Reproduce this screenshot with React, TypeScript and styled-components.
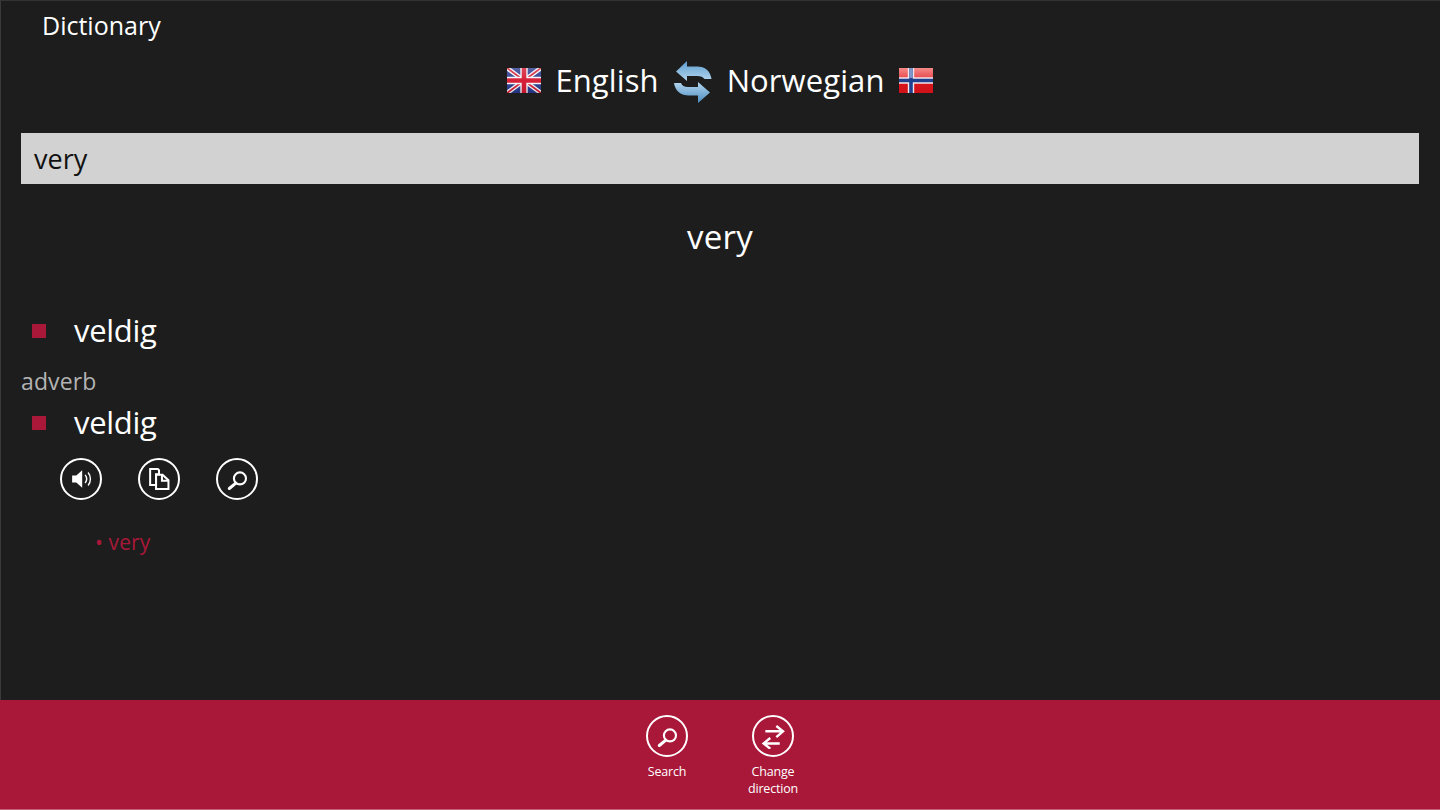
import React from "react";
import styled, { createGlobalStyle } from "styled-components";

const GlobalStyle = createGlobalStyle`
  html, body {
    margin: 0;
    padding: 0;
    background: #1d1d1d;
  }
  * {
    box-sizing: border-box;
  }
`;

const UkFlag = () => (
  <FlagSvg viewBox="0 0 34 25">
    <defs>
      <linearGradient id="ukShine" x1="0" y1="0" x2="0" y2="1">
        <stop offset="0" stopColor="#fff" stopOpacity=".22" />
        <stop offset=".5" stopColor="#fff" stopOpacity=".04" />
        <stop offset="1" stopColor="#000" stopOpacity=".1" />
      </linearGradient>
    </defs>
    <rect width="34" height="25" fill="#27398c" />
    <path d="M0 0L34 25M34 0L0 25" stroke="#f4f4f8" strokeWidth="4.4" />
    <path d="M0 0L34 25M34 0L0 25" stroke="#d4172f" strokeWidth="1.8" />
    <path d="M17 0V25M0 12.5H34" stroke="#f6f6f8" strokeWidth="7.4" />
    <path d="M17 0V25M0 12.5H34" stroke="#d4172f" strokeWidth="4.6" />
    <rect width="34" height="25" fill="url(#ukShine)" />
  </FlagSvg>
);

const NorwayFlag = () => (
  <FlagSvg viewBox="0 0 34 25">
    <defs>
      <linearGradient id="noRed" x1="0" y1="0" x2="0" y2="1">
        <stop offset="0" stopColor="#f58a8a" />
        <stop offset=".42" stopColor="#e8484c" />
        <stop offset=".55" stopColor="#d9141c" />
        <stop offset="1" stopColor="#d01218" />
      </linearGradient>
    </defs>
    <rect width="34" height="25" fill="url(#noRed)" />
    <path d="M12 0V25M0 12.5H34" stroke="#f1e6ea" strokeWidth="6.4" />
    <path d="M12 0V25M0 12.5H34" stroke="#1f3f8f" strokeWidth="3.6" />
    <rect x="10.2" width="3.6" height="10" fill="#7f97c8" />
  </FlagSvg>
);

const SwapArrows = () => (
  <SwapSvg viewBox="0 0 40 44">
    <defs>
      <linearGradient id="swapTop" x1="0" y1="0" x2="0" y2="1">
        <stop offset="0" stopColor="#5c9dcf" />
        <stop offset="1" stopColor="#b5d6ee" />
      </linearGradient>
      <linearGradient id="swapBottom" x1="0" y1="0" x2="0" y2="1">
        <stop offset="0" stopColor="#b5d6ee" />
        <stop offset="1" stopColor="#4a8cc2" />
      </linearGradient>
    </defs>
    <path d="M14 1L3 11.5L14 21V16H24C28 16 30 17 31.5 19H38.5C37.5 11 32 6.5 24 6.5H14Z" fill="url(#swapTop)" />
    <path d="M1 23C2 31 8 35.5 16 35.5H25V43L37 32.5L25 22V27H15C11 27 9 25.5 8 23Z" fill="url(#swapBottom)" />
  </SwapSvg>
);

const SpeakerGlyph = () => (
  <GlyphSvg viewBox="0 0 22 22">
    <path d="M3.5 8H7L12 3.5V18.5L7 14H3.5Z" fill="#fff" />
    <path d="M14.5 7.5C16 9.5 16 12.5 14.5 14.5M17 5.5C19.6 8.5 19.6 13.5 17 16.5" fill="none" stroke="#fff" strokeWidth="1.2" />
  </GlyphSvg>
);

const CopyGlyph = () => (
  <GlyphSvg viewBox="0 0 22 22">
    <path d="M3.5 2.5H10L11 3.5V7H8.5V16H3.5Z" fill="none" stroke="#fff" strokeWidth="1.7" />
    <path d="M8.5 7.5H14L19 12V19.5H8.5Z" fill="none" stroke="#fff" strokeWidth="1.7" />
    <path d="M13.5 7.5V12.5H19" fill="none" stroke="#fff" strokeWidth="1.7" />
  </GlyphSvg>
);

const SearchGlyph = () => (
  <GlyphSvg viewBox="0 0 22 22">
    <circle cx="13.5" cy="10.5" r="5.1" fill="none" stroke="#fff" strokeWidth="1.8" />
    <path d="M10 14.5L4.5 19" fill="none" stroke="#fff" strokeWidth="2.6" strokeLinecap="round" />
  </GlyphSvg>
);

const DirectionGlyph = () => (
  <GlyphSvg viewBox="0 0 22 22">
    <path d="M4.5 7H19.5M13.8 2.5L19.5 7L13.8 12" fill="none" stroke="#fff" strokeWidth="2" />
    <path d="M16.7 17.3H3M8.7 12.7L3 17.3L8.7 21.8" fill="none" stroke="#fff" strokeWidth="2" />
  </GlyphSvg>
);

const App = () => (
  <Page>
    <GlobalStyle />
    <Main>
      <Title>Dictionary</Title>
      <LanguageRow>
        <UkFlag />
        <LanguageName>English</LanguageName>
        <SwapArrows />
        <LanguageName>Norwegian</LanguageName>
        <NorwayFlag />
      </LanguageRow>
      <SearchBox>very</SearchBox>
      <HeadWord>very</HeadWord>
      <Translation $first>
        <Bullet />
        <TranslationText>veldig</TranslationText>
      </Translation>
      <PartOfSpeech>adverb</PartOfSpeech>
      <Translation>
        <Bullet />
        <TranslationText>veldig</TranslationText>
      </Translation>
      <ActionRow>
        <RoundButton><SpeakerGlyph /></RoundButton>
        <RoundButton><CopyGlyph /></RoundButton>
        <RoundButton><SearchGlyph /></RoundButton>
      </ActionRow>
      <Example>• very</Example>
    </Main>
    <AppBar>
      <BarCommand>
        <RoundButton><SearchGlyph /></RoundButton>
        <BarLabel>Search</BarLabel>
      </BarCommand>
      <BarCommand>
        <RoundButton><DirectionGlyph /></RoundButton>
        <BarLabel>Change direction</BarLabel>
      </BarCommand>
    </AppBar>
  </Page>
);

const Page = styled.div`
  width: 1440px;
  height: 810px;
  display: flex;
  flex-direction: column;
  overflow: hidden;
  background: #1d1d1d;
  font-family: "Open Sans", "Noto Sans", sans-serif;
  color: #fff;
`;
const Main = styled.div`
  flex: 1;
  display: flex;
  flex-direction: column;
  padding: 0 21px 0 20px;
  border-top: 1px solid #333;
  border-left: 1px solid #3a3a3a;
`;
const Title = styled.div`
  height: 49px;
  padding: 6px 0 0 21px;
  font-size: 25px;
  line-height: 36px;
`;
const LanguageRow = styled.div`
  height: 60px;
  display: flex;
  align-items: center;
  justify-content: center;
  gap: 14px;
`;
const LanguageName = styled.span`
  font-size: 31px;
  line-height: 42px;
  letter-spacing: 0.1px;
`;
const FlagSvg = styled.svg`
  width: 34px;
  height: 25px;
  display: block;
`;
const SwapSvg = styled.svg`
  width: 40px;
  height: 44px;
  margin-top: 3px;
  display: block;
`;
const SearchBox = styled.div`
  height: 51px;
  margin-top: 23px;
  padding-left: 13px;
  background: #d2d2d2;
  color: #111;
  font-size: 27px;
  line-height: 52px;
`;
const HeadWord = styled.div`
  margin-top: 31px;
  text-align: center;
  font-size: 33px;
  line-height: 44px;
  letter-spacing: 0.3px;
`;
const Translation = styled.div<{ $first?: boolean }>`
  display: flex;
  align-items: center;
  height: 44px;
  margin-top: ${(p) => (p.$first ? "50px" : "0")};
  padding-left: 11px;
`;
const Bullet = styled.span`
  width: 14px;
  height: 14px;
  background: #a91839;
`;
const TranslationText = styled.span`
  margin-left: 28px;
  padding-bottom: 2px;
  font-size: 31px;
  line-height: 42px;
  letter-spacing: -0.3px;
`;
const PartOfSpeech = styled.div`
  height: 48px;
  padding-top: 12px;
  font-size: 23px;
  line-height: 32px;
  letter-spacing: 0.1px;
  color: #b3b3b3;
`;
const ActionRow = styled.div`
  display: flex;
  gap: 36px;
  margin-top: 13px;
  padding-left: 39px;
`;
const RoundButton = styled.div`
  width: 42px;
  height: 42px;
  display: flex;
  align-items: center;
  justify-content: center;
  border: 2px solid #fff;
  border-radius: 50%;
`;
const GlyphSvg = styled.svg`
  width: 26px;
  height: 26px;
  display: block;
`;
const Example = styled.div`
  margin-top: 27px;
  padding-left: 74px;
  font-size: 21px;
  line-height: 30px;
  letter-spacing: 0.1px;
  color: #a91839;
`;
const AppBar = styled.div`
  height: 110px;
  display: flex;
  justify-content: center;
  gap: 16px;
  padding: 15px 0 0 0;
  background: #a91839;
  border-bottom: 1px solid #c4607a;
`;
const BarCommand = styled.div`
  width: 90px;
  display: flex;
  flex-direction: column;
  align-items: center;
`;
const BarLabel = styled.div`
  margin-top: 6px;
  width: 70px;
  text-align: center;
  font-size: 12.5px;
  line-height: 17px;
  letter-spacing: -0.2px;
`;

export default App;
